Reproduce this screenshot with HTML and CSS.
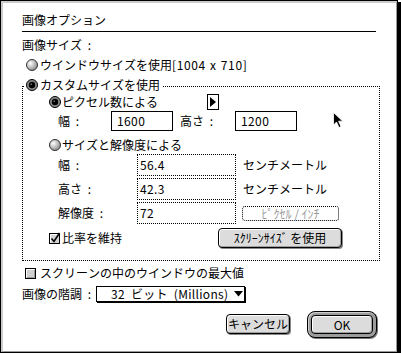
FILE: index.html
```html
<!DOCTYPE html>
<html lang="ja">
<head>
<meta charset="utf-8">
<link rel="stylesheet" href="styles.css">
</head>
<body>
<div class="window">
  <div class="frame">
    <div class="title">画像オプション</div>
    <div class="heading">画像サイズ :</div>
    <div class="row opt1">
      <svg class="radio" width="12" height="12" viewBox="0 0 12 12"><defs><radialGradient id="g1" cx="35%" cy="35%" r="70%"><stop offset="0" stop-color="#fff"/><stop offset="1" stop-color="#8a8a8a"/></radialGradient></defs><circle cx="6" cy="6" r="5.5" fill="url(#g1)" stroke="#333"/></svg>
      <span>ウインドウサイズを使用<span class="latin">[1004 x 710]</span></span>
    </div>
    <div class="group">
      <div class="legend">
        <svg class="radio" width="12" height="12" viewBox="0 0 12 12"><circle cx="6" cy="6" r="5.5" fill="#8a8a8a" stroke="#000"/><circle cx="6" cy="6" r="3.2" fill="#000"/><circle cx="5.2" cy="5.2" r="0.9" fill="#666"/></svg>
        <span>カスタムサイズを使用</span>
      </div>
      <div class="row sub">
        <svg class="radio" width="12" height="12" viewBox="0 0 12 12"><circle cx="6" cy="6" r="5.5" fill="#8a8a8a" stroke="#000"/><circle cx="6" cy="6" r="3.2" fill="#000"/><circle cx="5.2" cy="5.2" r="0.9" fill="#666"/></svg>
        <span class="subtxt">ピクセル数による</span>
        <span class="tri"><svg width="10" height="14" viewBox="0 0 10 14"><polygon points="2,2 8,7 2,12" fill="#000"/></svg></span>
      </div>
      <div class="fields">
        <span class="lbl l1">幅 :</span>
        <span class="field">1600</span>
        <span class="lbl l2">高さ :</span>
        <span class="field">1200</span>
      </div>
      <div class="row sub sub2">
        <svg class="radio" width="12" height="12" viewBox="0 0 12 12"><defs><radialGradient id="g2" cx="35%" cy="35%" r="70%"><stop offset="0" stop-color="#fff"/><stop offset="1" stop-color="#8a8a8a"/></radialGradient></defs><circle cx="6" cy="6" r="5.5" fill="url(#g2)" stroke="#333"/></svg>
        <span>サイズと解像度による</span>
      </div>
      <div class="frow first">
        <span class="lbl flbl">幅 :</span>
        <span class="dfield">56.4</span>
        <span class="unit">センチメートル</span>
      </div>
      <div class="frow">
        <span class="lbl flbl">高さ :</span>
        <span class="dfield">42.3</span>
        <span class="unit">センチメートル</span>
      </div>
      <div class="frow">
        <span class="lbl flbl">解像度 :</span>
        <span class="dfield">72</span>
        <span class="dbtn">ﾋﾟｸｾﾙ / ｲﾝﾁ</span>
      </div>
      <div class="crow">
        <svg class="check" width="12" height="12" viewBox="0 0 12 12"><rect x="0.5" y="1.5" width="10" height="10" fill="#d4d4d4" stroke="#000"/><path d="M1.5 2.5H9.5M1.5 2.5V10.5" stroke="#fff"/><path d="M2.5 6.5L5 9.5L10.5 1" fill="none" stroke="#000" stroke-width="1.6"/></svg>
        <span class="ctxt">比率を維持</span>
        <span class="btn scrbtn">ｽｸﾘｰﾝｻｲｽﾞ を使用</span>
      </div>
    </div>
    <div class="row chk2">
      <svg class="check" width="11" height="11" viewBox="0 0 11 11"><rect x="0.5" y="0.5" width="10" height="10" fill="#cfcfcf" stroke="#000"/><path d="M1.5 1.5H9.5M1.5 1.5V9.5" stroke="#fff"/><path d="M2 9.5H9.5V2" stroke="#999" fill="none"/></svg>
      <span>スクリーンの中のウインドウの最大値</span>
    </div>
    <div class="poprow">
      <span class="plbl">画像の階調 :</span>
      <div class="popup">
        <span class="poptxt">32 ビット (Millions)</span>
        <svg class="parrow" width="9" height="6" viewBox="0 0 9 6"><polygon points="0,0 9,0 4.5,5.5" fill="#000"/></svg>
      </div>
    </div>
    <div class="btnrow">
      <span class="btn cancel">キャンセル</span>
      <div class="okring"><span class="btn ok">OK</span></div>
    </div>
  </div>
  <svg class="cursor" width="12" height="17" viewBox="0 0 12 17"><path d="M0.5 0.5V13L3.5 10L6 15.5L8 14.6L5.6 9.2H9.8Z" fill="#000" stroke="#fff" stroke-width="0.8"/></svg>
</div>
</body>
</html>
```
FILE: styles.css
```css
* { box-sizing: border-box; }
html, body { margin: 0; padding: 0; background: #fff; }
body {
  font-family: "Noto Sans CJK JP", "Noto Sans", sans-serif;
  font-size: 12px;
  line-height: 16px;
  color: #000;
  font-kerning: none;
  font-feature-settings: "palt" 0, "kern" 0;
}
.window {
  position: relative;
  width: 398px;
  height: 353px;
  border: 1px solid #000;
  box-shadow: 3px 2px 0 #000;
  background: #fff;
}
.frame {
  height: 100%;
  border-style: solid;
  border-width: 2px 1px 1px 2px;
  border-color: #cccccc #999 #999 #cccccc;
  padding-left: 19px;
  display: flex;
  flex-direction: column;
  align-items: flex-start;
}
.title {
  width: 354px;
  padding-top: 9px;
  padding-bottom: 3px;
  border-bottom: 1px solid #000;
  line-height: 16px;
}
.heading { margin-top: 5px; height: 16px; word-spacing: 3px; }
.row { display: flex; align-items: center; height: 16px; }
.radio, .check { flex: none; display: block; }
.opt1 { margin-top: 4px; padding-left: 4px; gap: 2px; }
.latin { letter-spacing: 0.6px; word-spacing: 1px; }
.group {
  margin-top: 13px;
  width: 358px;
  height: 175px;
  border: 1px dotted #000;
  display: flex;
  flex-direction: column;
  align-items: flex-start;
}
.legend {
  margin-top: -10px;
  margin-left: 1px;
  padding: 0 2px;
  height: 16px;
  background: #fff;
  display: flex;
  align-items: center;
  gap: 2px;
}
.sub { margin-top: 1px; padding-left: 26px; gap: 1px; }
.sub2 { margin-top: 6px; }
.subtxt { width: 144px; }
.tri {
  width: 12px;
  height: 16px;
  border: 1px solid #000;
  background: #fff;
  display: flex;
  align-items: center;
  justify-content: center;
}
.tri svg { display: block; }
.fields {
  margin-top: 1px;
  height: 20px;
  padding-left: 35px;
  display: flex;
  align-items: center;
}
.lbl { word-spacing: 3px; }
.l1 { width: 53px; }
.l2 { margin-left: 7px; width: 55px; }
.field {
  width: 62px;
  height: 20px;
  border: 1px solid #000;
  padding-left: 5px;
  line-height: 18px;
  letter-spacing: 0.4px;
}
.frow {
  margin-top: 2px;
  height: 22px;
  padding-left: 35px;
  display: flex;
  align-items: center;
}
.frow.first { margin-top: 1px; }
.flbl { width: 79px; }
.dfield {
  width: 99px;
  height: 22px;
  border: 1px dotted #000;
  padding-left: 2px;
  line-height: 20px;
  letter-spacing: 0.4px;
}
.unit { margin-left: 7px; }
.dbtn {
  margin-left: 6px;
  width: 97px;
  height: 15px;
  border: 1px dotted #000;
  border-radius: 3px;
  color: #9a9a9a;
  font-size: 12px;
  line-height: 13px;
  text-align: center;
  white-space: nowrap;
}
.crow {
  margin-top: 4px;
  height: 20px;
  padding-left: 26px;
  display: flex;
  align-items: center;
  gap: 1px;
}
.ctxt { width: 155px; }
.btn {
  display: flex;
  align-items: center;
  justify-content: center;
  height: 20px;
  border: 1px solid #000;
  border-radius: 4px;
  background: #dcdcdc;
  box-shadow: inset 1px 1px 0 #fff, inset -1px -1px 0 #a0a0a0, 1px 1px 0 #888;
  white-space: nowrap;
}
.scrbtn { width: 124px; }
.chk2 { margin-top: 4px; padding-left: 3px; gap: 4px; }
.poprow {
  margin-top: 4px;
  height: 18px;
  display: flex;
  align-items: flex-start;
}
.plbl { width: 74px; padding-top: 1px; word-spacing: 3px; }
.popup {
  margin-top: 1px;
  width: 149px;
  height: 16px;
  border: 1px solid #000;
  box-shadow: 1px 1px 0 #000;
  padding-left: 14px;
  padding-right: 1px;
  display: flex;
  align-items: center;
  justify-content: space-between;
  line-height: 14px;
}
.poptxt { word-spacing: 3px; letter-spacing: 0.3px; }
.parrow { display: block; }
.btnrow {
  margin-top: 8px;
  height: 27px;
  padding-left: 204px;
  display: flex;
  align-items: flex-start;
}
.cancel { width: 64px; margin-top: 3px; }
.okring {
  margin-left: 17px;
  width: 70px;
  height: 27px;
  border: 1px solid #000;
  border-radius: 8px;
  padding: 3px;
  background: #9c9c9c;
  box-shadow: inset 1px 1px 0 #d0d0d0, 1px 1px 0 #777;
}
.ok { width: 100%; height: 100%; box-shadow: inset 1px 1px 0 #fff, inset -1px -1px 0 #a0a0a0; }
.cursor {
  position: absolute;
  left: 332px;
  top: 111px;
  display: block;
}
```
